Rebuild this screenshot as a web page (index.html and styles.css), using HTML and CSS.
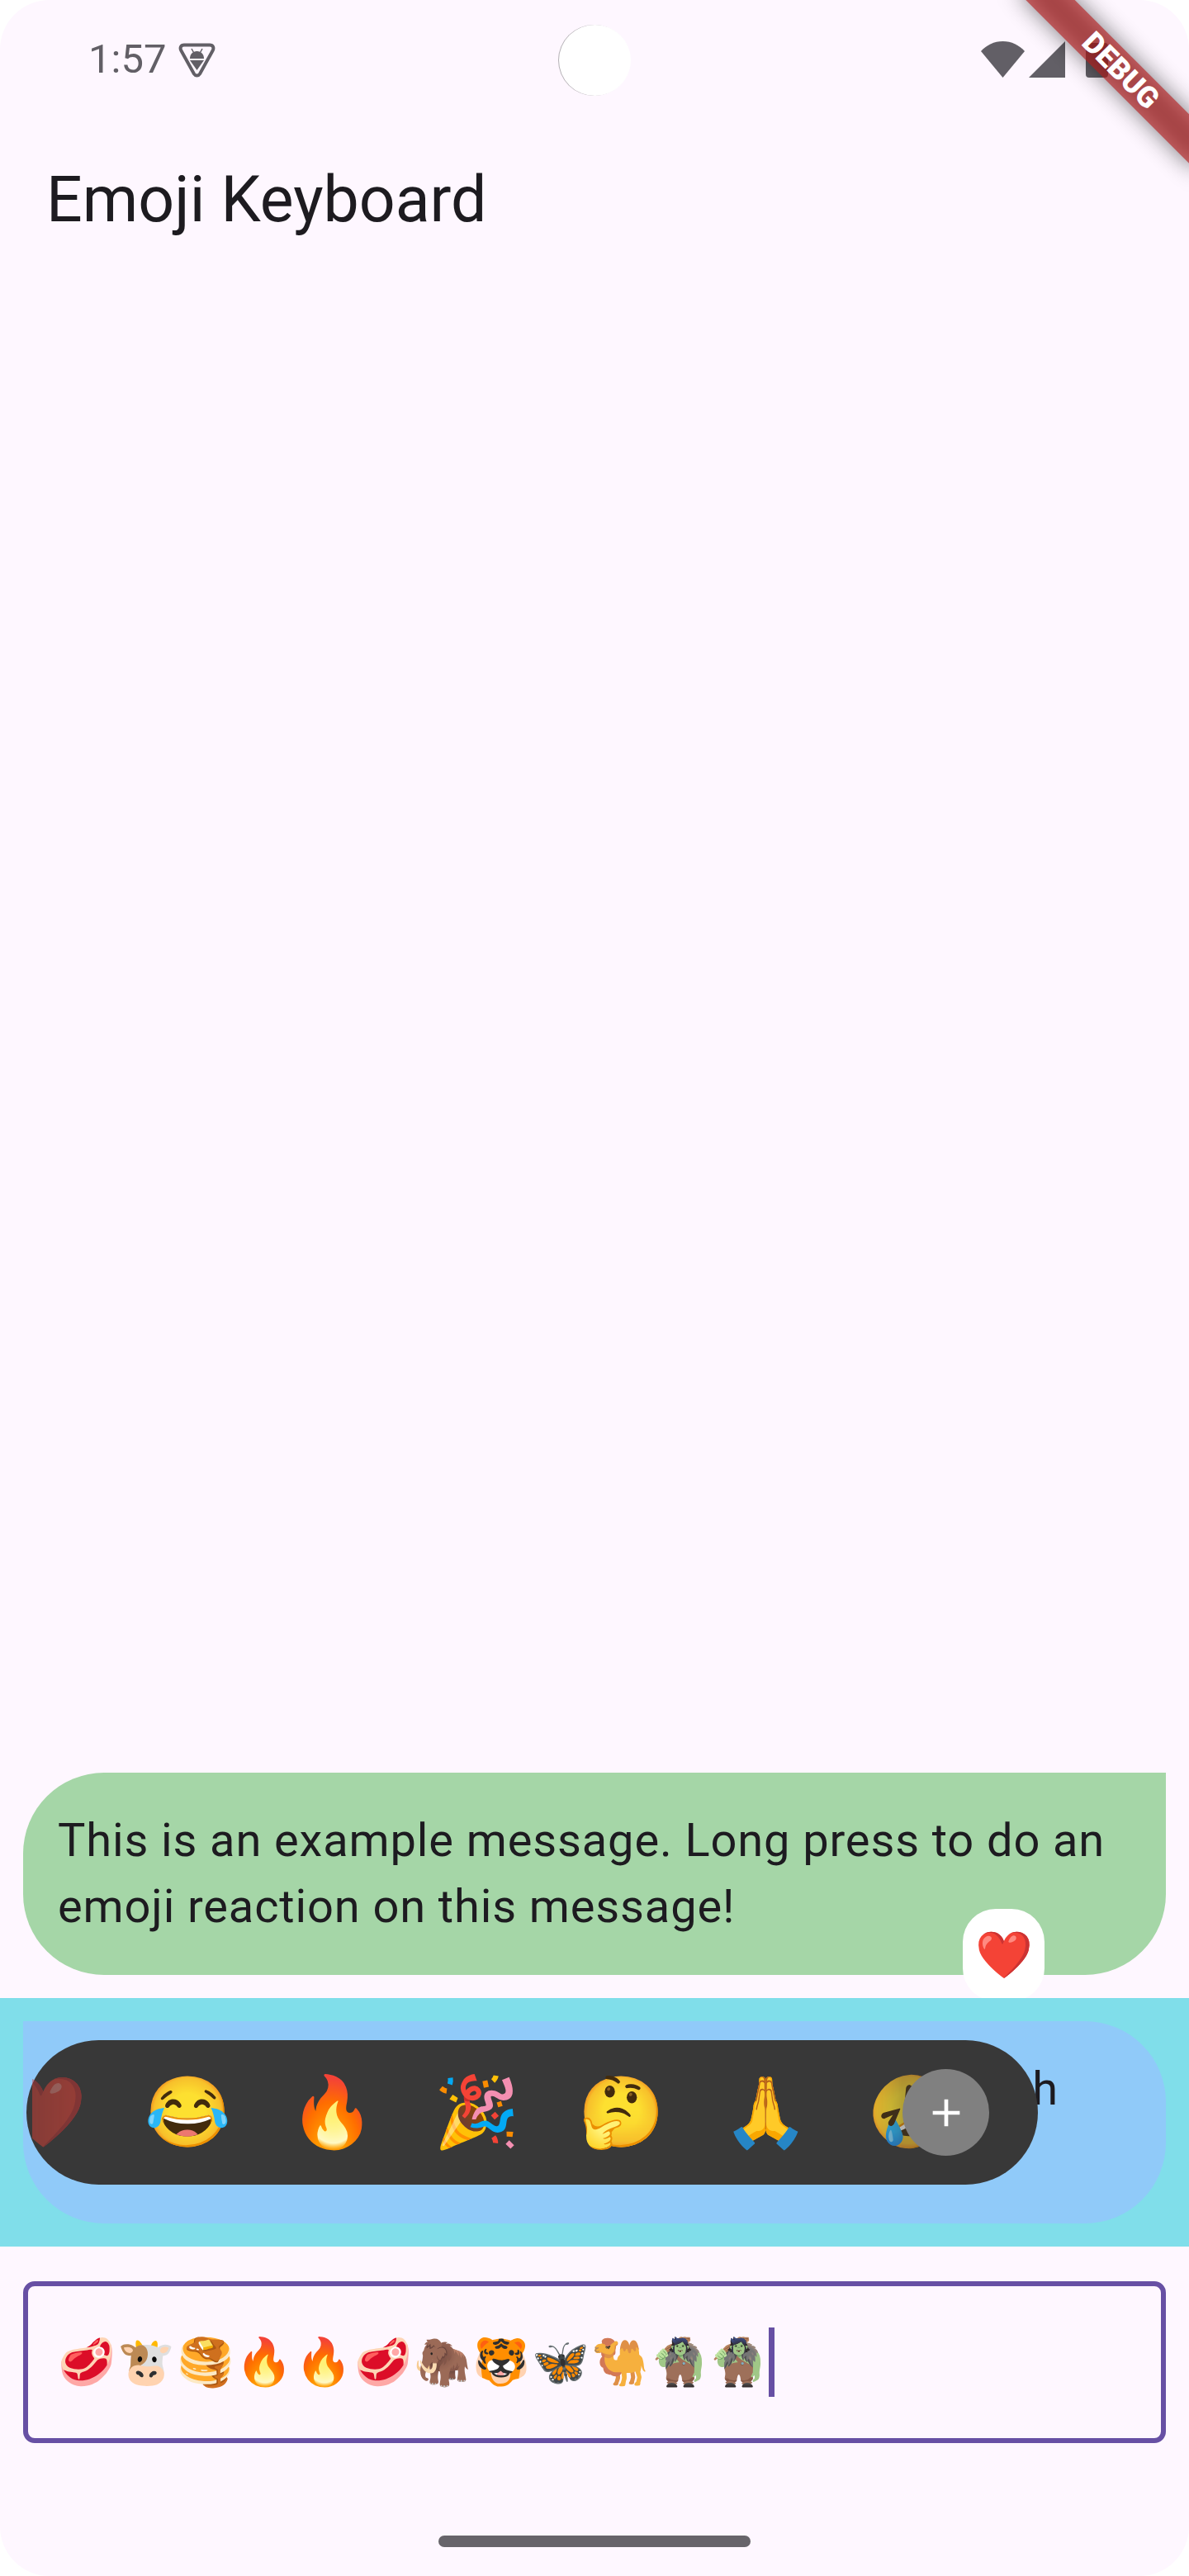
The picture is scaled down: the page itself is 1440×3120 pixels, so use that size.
FILE: index.html
```html
<!DOCTYPE html>
<html lang="en">
<head>
<meta charset="utf-8">
<title>Emoji Keyboard</title>
<link rel="stylesheet" href="styles.css">
</head>
<body>
<div class="screen">
  <header class="status">
    <div class="status-left">
      <span class="clock">1:57</span>
      <svg class="shield" viewBox="0 0 45 42" width="45" height="42">
        <path d="M7 2.500H38C42 2.500 43.500 6 41.500 9.500L26 37.500C24.500 40 20.500 40 19 37.500L3.500 9.500C1.500 6 3 2.500 7 2.500Z" fill="none" stroke="#625f66" stroke-width="4"/>
        <path d="M14 19C14 13.500 17.500 10 22.500 10S31 13.500 31 19Z" fill="#625f66"/>
        <path d="M14 21H31L22.500 33Z" fill="#625f66"/>
        <path d="M16 7L18.500 11.500M29 7L26.500 11.500" stroke="#625f66" stroke-width="1.500"/>
      </svg>
    </div>
    <div class="status-right">
      <svg width="53" height="44" viewBox="0 0 53 44"><path d="M0 12C7 4.500 16 0 26.500 0S46 4.500 53 12L26.500 44Z" fill="#625f66"/></svg>
      <svg class="signal" width="44" height="44" viewBox="0 0 44 44"><path d="M44 0V44H0Z" fill="#625f66"/></svg>
      <div class="battery"></div>
    </div>
  </header>

  <div class="appbar"><h1 class="title">Emoji Keyboard</h1></div>

  <main class="spacer"></main>

  <section class="green-row">
    <div class="bubble bubble-green">This is an example message. Long press to do an emoji reaction on this message!</div>
    <div class="chip">❤️</div>
  </section>

  <section class="cyan-row">
    <div class="bubble bubble-blue"><span>h</span></div>
    <div class="reaction-bar">
      <div class="reaction-clip">
        <div class="reaction-list">
          <span class="reaction">❤️</span>
          <span class="reaction">😂</span>
          <span class="reaction">🔥</span>
          <span class="reaction">🎉</span>
          <span class="reaction">🤔</span>
          <span class="reaction">🙏</span>
          <span class="reaction">🤣</span>
        </div>
      </div>
      <div class="plus">
        <svg width="56" height="56" viewBox="0 0 24 24"><path d="M19 13h-6v6h-2v-6H5v-2h6V5h2v6h6v2z" fill="#fff"/></svg>
      </div>
    </div>
  </section>

  <div class="input">
    <span class="input-text">🥩🐮🥞🔥🔥🥩🦣🐯🦋🐫🧌🧌</span><span class="caret"></span>
  </div>

  <footer class="home-area"><div class="home"></div></footer>

  <div class="camera"></div>
  <div class="banner">
    <div class="banner-shadow"></div>
    <div class="banner-band">DEBUG</div>
  </div>
</div>
</body>
</html>
```

FILE: styles.css
```css
* { box-sizing: border-box; }
html, body { margin: 0; background: #fff; }
body { font-family: Roboto, sans-serif; color: #1d1b20; }

.screen {
  position: relative;
  width: 1440px;
  height: 3120px;
  display: flex;
  flex-direction: column;
  background: #fef7ff;
  border-radius: 60px;
  overflow: hidden;
}

.status {
  height: 144px;
  flex: none;
  display: flex;
  justify-content: space-between;
  align-items: center;
  padding: 0 98px 0 107px;
}
.status-left { display: flex; align-items: center; gap: 15px; }
.clock { font-size: 49px; line-height: 56px; font-weight: 400; color: #625f66; }
.shield { margin-top: 2px; }
.status-right { display: flex; align-items: center; gap: 5px; }
.signal { margin-right: 20px; }
.battery { width: 27px; height: 42px; background: #625f66; border-radius: 4px; margin-top: 2px; }

.appbar { height: 196px; flex: none; display: flex; align-items: center; padding: 0 56px; }
.title { margin: 0; font-size: 77px; line-height: 112px; font-weight: 400; }

.spacer { flex: 1; }

.bubble {
  margin: 0 28px;
  padding: 42px;
  min-height: 245px;
  font-size: 56px;
  line-height: 80px;
  letter-spacing: 0.875px;
}

.green-row { position: relative; flex: none; padding: 28px 0; }
.bubble-green { background: #a5d6a7; border-radius: 98px 0 98px 98px; }
.chip {
  position: absolute;
  left: 1166px;
  top: 193px;
  width: 99px;
  height: 112px;
  border-radius: 40px;
  background: #fff;
  display: flex;
  align-items: center;
  justify-content: center;
  font-size: 56px;
  line-height: 1;
}

.cyan-row { position: relative; flex: none; background: #80deea; padding: 28px 0; z-index: 1; }
.bubble-blue {
  background: #90caf9;
  border-radius: 0 98px 98px 98px;
  display: flex;
  justify-content: flex-end;
  padding-right: 130px;
}

.reaction-bar {
  position: absolute;
  left: 32px;
  top: 51px;
  width: 1225px;
  height: 175px;
  border-radius: 88px;
  background: #383838;
}
.reaction-clip {
  position: absolute;
  left: 7px;
  top: 0;
  width: 1120px;
  height: 175px;
  overflow: hidden;
  -webkit-mask-image: linear-gradient(to right, rgba(0,0,0,.42) 0, rgba(0,0,0,.5) 60px, #000 110px, #000 1005px, rgba(0,0,0,.62) 1054px);
  mask-image: linear-gradient(to right, rgba(0,0,0,.42) 0, rgba(0,0,0,.5) 60px, #000 110px, #000 1005px, rgba(0,0,0,.62) 1054px);
}
.reaction-list { display: flex; height: 100%; margin-left: -74.500px; align-items: center; }
.reaction {
  flex: none;
  width: 175px;
  text-align: center;
  font-size: 84px;
  line-height: 175px;
  height: 175px;
}
.plus {
  position: absolute;
  left: 1061px;
  top: 35px;
  width: 105px;
  height: 105px;
  border-radius: 50%;
  background: #808080;
  display: flex;
  align-items: center;
  justify-content: center;
}

.input {
  flex: none;
  margin: 42px 28px 0;
  height: 196px;
  border: 6.500px solid #6750a4;
  border-radius: 14px;
  padding: 0 36px;
  display: flex;
  align-items: center;
}
.input-text { font-size: 56px; letter-spacing: 1.750px; line-height: 84px; white-space: nowrap; }
.caret { flex: none; width: 7px; height: 84px; background: #6750a4; }

.home-area { flex: none; height: 161px; padding-top: 112px; display: flex; justify-content: center; }
.home { width: 378px; height: 14px; border-radius: 7px; background: #67646a; }

.camera {
  position: absolute;
  left: 677px;
  top: 30px;
  width: 87px;
  height: 86px;
  border-radius: 50%;
  background: #fff;
  box-shadow: -1px 0 0 rgba(90, 90, 90, .45);
}

.banner {
  position: absolute;
  left: 1206px;
  top: 63px;
  width: 300px;
  height: 42px;
  transform: rotate(45deg);
}
.banner-shadow { position: absolute; inset: 0; background: rgba(0, 0, 0, .5); filter: blur(14px); }
.banner-band {
  position: absolute;
  inset: 0;
  padding-left: 4px;
  background: rgba(183, 28, 28, .627);
  color: #fff;
  text-align: center;
  font-size: 35.700px;
  line-height: 42px;
  font-weight: 900;
}
```
